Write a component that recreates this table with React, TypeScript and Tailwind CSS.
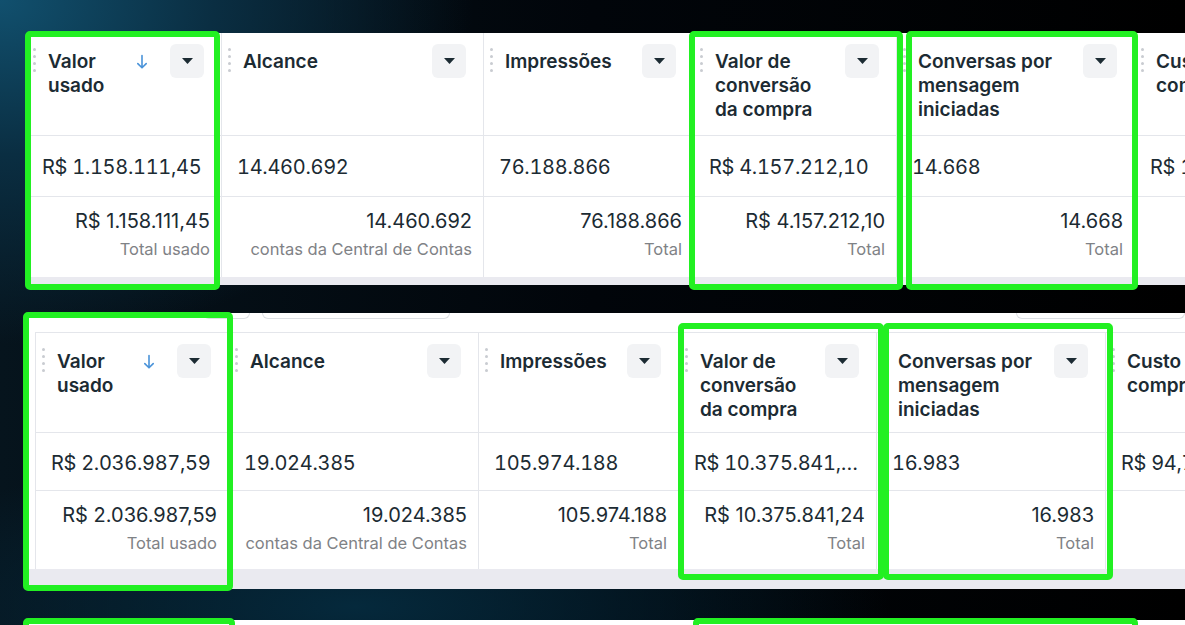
type Col = {
  w: string;
  title: string[];
  sort?: boolean;
  value: string;
  total?: string;
  label?: string;
};

type Dims = { head: string; data: string; total: string };

const topCols: Col[] = [
  { w: "w-[195px]", title: ["Valor", "usado"], sort: true, value: "R$ 1.158.111,45", total: "R$ 1.158.111,45", label: "Total usado" },
  { w: "w-[262px]", title: ["Alcance"], value: "14.460.692", total: "14.460.692", label: "contas da Central de Contas" },
  { w: "w-[210px]", title: ["Impressões"], value: "76.188.866", total: "76.188.866", label: "Total" },
  { w: "w-[203px]", title: ["Valor de", "conversão", "da compra"], value: "R$ 4.157.212,10", total: "R$ 4.157.212,10", label: "Total" },
  { w: "w-[238px]", title: ["Conversas por", "mensagem", "iniciadas"], value: "14.668", total: "14.668", label: "Total" },
  { w: "w-[220px]", title: ["Custo por", "compra"], value: "R$ 126,12" },
];

const bottomCols: Col[] = [
  { w: "w-[193px]", title: ["Valor", "usado"], sort: true, value: "R$ 2.036.987,59", total: "R$ 2.036.987,59", label: "Total usado" },
  { w: "w-[250px]", title: ["Alcance"], value: "19.024.385", total: "19.024.385", label: "contas da Central de Contas" },
  { w: "w-[200px]", title: ["Impressões"], value: "105.974.188", total: "105.974.188", label: "Total" },
  { w: "w-[198px]", title: ["Valor de", "conversão", "da compra"], value: "R$ 10.375.841,…", total: "R$ 10.375.841,24", label: "Total" },
  { w: "w-[229px]", title: ["Conversas por", "mensagem", "iniciadas"], value: "16.983", total: "16.983", label: "Total" },
  { w: "w-[220px]", title: ["Custo", "compra"], value: "R$ 94,71" },
];

function Handle() {
  return (
    <div className="mt-[4px] flex w-[3px] shrink-0 flex-col gap-[4px]">
      <span className="h-[3px] w-[3px] rounded-full bg-[#c9ccd1]" />
      <span className="h-[3px] w-[3px] rounded-full bg-[#c9ccd1]" />
      <span className="h-[3px] w-[3px] rounded-full bg-[#c9ccd1]" />
      <span className="h-[3px] w-[3px] rounded-full bg-[#c9ccd1]" />
    </div>
  );
}

function SortArrow() {
  return (
    <svg className="mr-[22px] mt-[10px] h-[16px] w-[12px] shrink-0" viewBox="0 0 12 16" fill="none">
      <path d="M6 1.5v12M1.8 9.6 6 13.8l4.2-4.2" stroke="#4a93d9" strokeWidth="1.6" strokeLinecap="round" strokeLinejoin="round" />
    </svg>
  );
}

function Dropdown() {
  return (
    <div className="flex h-[34px] w-[34px] shrink-0 items-center justify-center rounded-[6px] bg-[#f2f3f5]">
      <svg className="h-[6px] w-[11px]" viewBox="0 0 11 6">
        <path d="M0 0h11L5.5 6z" fill="#1c2b33" />
      </svg>
    </div>
  );
}

function Column({ col, dims }: { col: Col; dims: Dims }) {
  return (
    <div className={`${col.w} flex shrink-0 flex-col border-r border-[#e4e6eb]`}>
      {/* header */}
      <div className={`${dims.head} flex items-start border-b border-[#e4e6eb] pl-[6px] pr-[17px] pt-[11px]`}>
        <Handle />
        <div className="ml-[12px] flex-1 whitespace-nowrap pt-[6px] text-[19px] font-semibold leading-[24px] text-[#1c2b33]">
          {col.title.map((t) => (
            <div key={t}>{t}</div>
          ))}
        </div>
        {col.sort && <SortArrow />}
        <Dropdown />
      </div>

      {/* row */}
      <div className={`${dims.data} flex items-center whitespace-nowrap border-b border-[#e4e6eb] pl-[15px] pt-[2px] text-[20px] tracking-[-0.3px] tabular-nums text-[#1c2b33]`}>
        {col.value}
      </div>

      {/* totals */}
      <div className={`${dims.total} flex flex-col items-end whitespace-nowrap pr-[11px] pt-[12px]`}>
        {col.total && <div className="text-[20px] leading-[24px] text-[#1c2b33]">{col.total}</div>}
        {col.label && <div className="mt-[6px] text-[16.5px] leading-[20px] text-[#7f8286]">{col.label}</div>}
      </div>
    </div>
  );
}

function Box({ className }: { className: string }) {
  return <div className={`pointer-events-none absolute rounded-[5px] border-[6px] border-[#22f022] ${className}`} />;
}

export default function App() {
  const topDims: Dims = { head: "h-[103px]", data: "h-[61px]", total: "h-[80px]" };
  const bottomDims: Dims = { head: "h-[100px]", data: "h-[58px]", total: "h-[78px]" };

  return (
    <div className="flex h-[625px] w-full flex-col overflow-hidden bg-[radial-gradient(ellipse_40%_55%_at_0%_0%,#11506e_0%,#0a2e42_45%,transparent_100%),radial-gradient(ellipse_45%_25%_at_30%_97%,#05293c_0%,transparent_100%),linear-gradient(90deg,#06141d_0%,#01050a_50%,#000_100%)] font-['Inter','Liberation_Sans',sans-serif]">
      {/* first table */}
      <div className="relative ml-[27px] mt-[33px] shrink-0 bg-white">
        <div className="flex">
          {topCols.map((c) => (
            <Column key={c.title.join()} col={c} dims={topDims} />
          ))}
        </div>
        <div className="h-[8px] bg-[#eaeaf0]" />
        <Box className="-left-[2px] -top-[2px] h-[259px] w-[195px]" />
        <Box className="left-[662px] -top-[2px] h-[259px] w-[214px]" />
        <Box className="left-[879px] -top-[2px] h-[259px] w-[232px]" />
      </div>

      {/* second table */}
      <div className="relative ml-[29px] mt-[28px] shrink-0 bg-white">
        <div className="flex h-[19px] items-start">
          <div className="ml-[174px] h-[6px] w-[55px] rounded-b-[6px] border border-t-0 border-[#dcdfe3]" />
          <div className="ml-[12px] h-[6px] w-[222px] rounded-b-[6px] border border-t-0 border-[#dcdfe3]" />
          <div className="ml-[566px] h-[6px] w-[200px] rounded-b-[6px] border border-t-0 border-[#dcdfe3]" />
        </div>
        <div className="ml-[6px] flex border-l border-t border-[#e4e6eb]">
          {bottomCols.map((c) => (
            <Column key={c.title.join()} col={c} dims={bottomDims} />
          ))}
        </div>
        <div className="h-[20px] bg-[#eaeaf0]" />
        <Box className="-left-[6px] -top-[1px] h-[279px] w-[210px]" />
        <Box className="left-[649px] top-[10px] h-[257px] w-[206px]" />
        <Box className="left-[854px] top-[10px] h-[257px] w-[230px]" />
      </div>

      {/* third table, cut off */}
      <div className="relative ml-[27px] mt-[31px] flex-1 bg-white">
        <Box className="-left-[4px] -top-[2px] h-[40px] w-[212px]" />
        <Box className="left-[666px] -top-[2px] h-[40px] w-[445px]" />
      </div>
    </div>
  );
}
